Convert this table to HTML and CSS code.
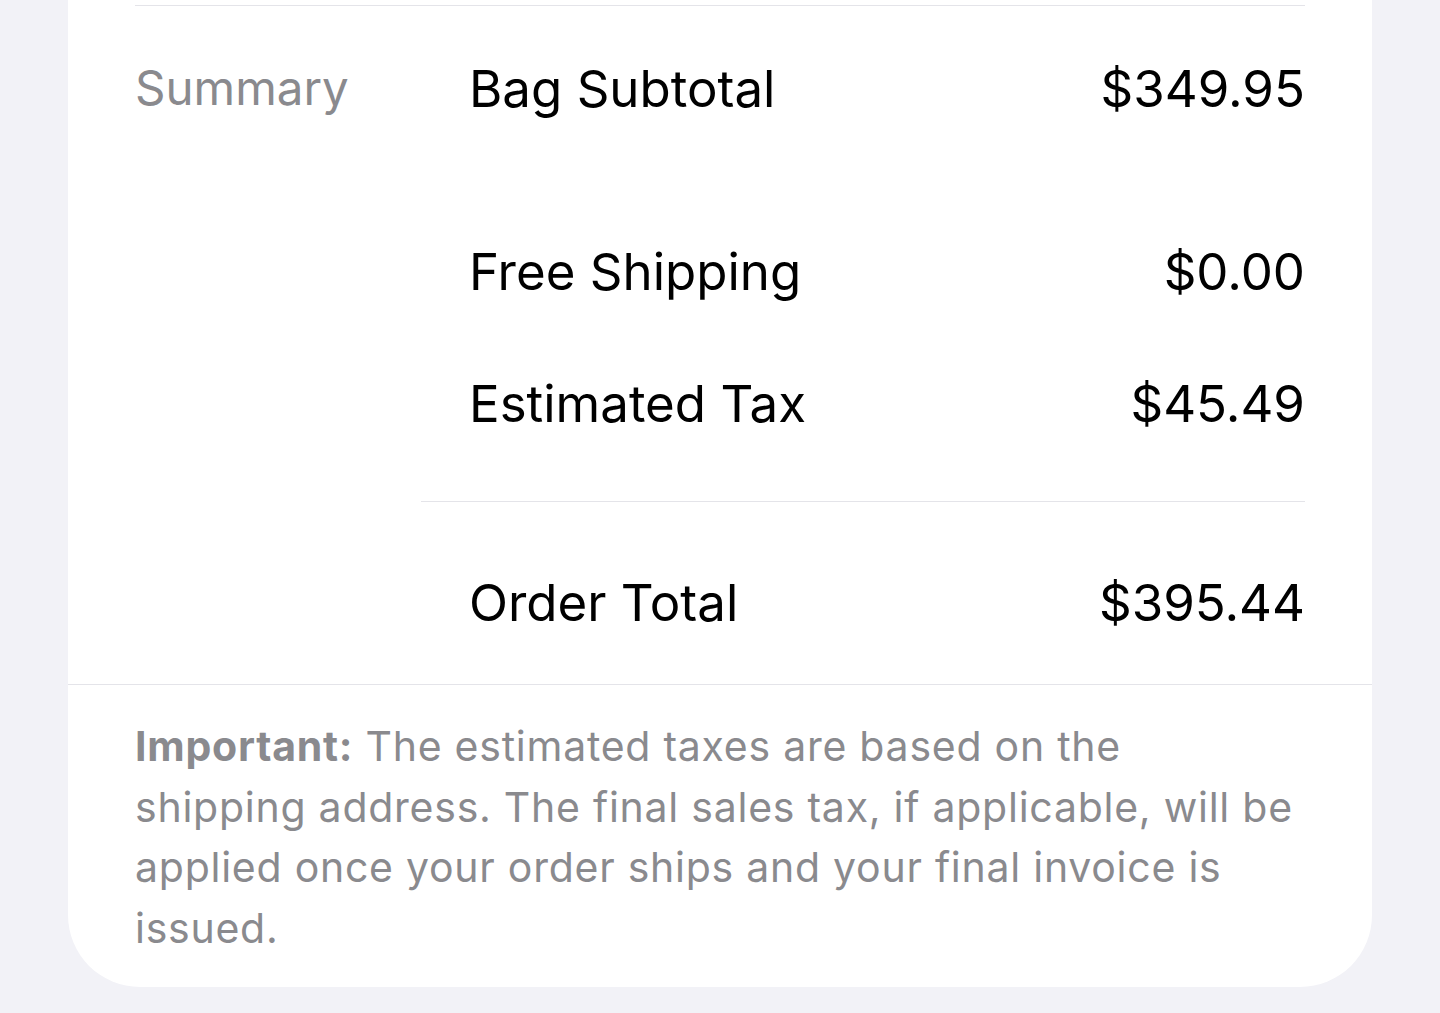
FILE: index.html
```html
<!DOCTYPE html>
<html lang="en">
<head>
<meta charset="utf-8">
<title>Summary</title>
<link rel="stylesheet" href="styles.css">
</head>
<body>
<div class="card">
  <div class="inner">
    <div class="divider"></div>
    <div class="summary">
      <div class="label">Summary</div>
      <div class="rows">
        <div class="row first"><span>Bag Subtotal</span><span>$349.95</span></div>
        <div class="row gap"><span>Free Shipping</span><span>$0.00</span></div>
        <div class="row"><span>Estimated Tax</span><span>$45.49</span></div>
        <div class="divider sub"></div>
        <div class="row total"><span>Order Total</span><span>$395.44</span></div>
      </div>
    </div>
  </div>
  <div class="divider full"></div>
  <p class="note"><strong>Important:</strong> The estimated taxes are based on the<br>shipping address. The final sales tax, if applicable, will be<br>applied once your order ships and your final invoice is<br>issued.</p>
</div>
</body>
</html>
```

FILE: styles.css
```css
html, body {
  margin: 0;
  padding: 0;
}
body {
  background: #f2f2f7;
  font-family: Inter, "Liberation Sans", sans-serif;
  height: 1013px;
  overflow: hidden;
}
.card {
  margin: 0 68px;
  background: #ffffff;
  border-radius: 0 0 72px 72px;
  padding-top: 5px;
  padding-bottom: 29px;
}
.inner {
  padding: 0 67px;
}
.divider {
  height: 1px;
  background: #e4e4e9;
}
.summary {
  display: grid;
  grid-template-columns: 286px 1fr;
}
.label {
  margin-top: 16px;
  height: 132px;
  line-height: 132px;
  font-size: 47.5px;
  color: #8a8a8e;
}
.rows {
  display: flex;
  flex-direction: column;
}
.row {
  display: flex;
  justify-content: space-between;
  align-items: center;
  height: 132px;
  padding-left: 48px;
  font-size: 51px;
  color: #000;
}
.row.first {
  margin-top: 16px;
}
.row.gap {
  margin-top: 51px;
}
.divider.sub {
  margin-top: 32px;
}
.row.total {
  margin-top: 18px;
  height: 164px;
}
.note {
  margin: 31px 0 0;
  padding: 0 67px;
  font-size: 41px;
  line-height: 60.6px;
  letter-spacing: 0.75px;
  color: #8a8a8e;
  white-space: nowrap;
}
.note strong {
  font-weight: 700;
}
```
